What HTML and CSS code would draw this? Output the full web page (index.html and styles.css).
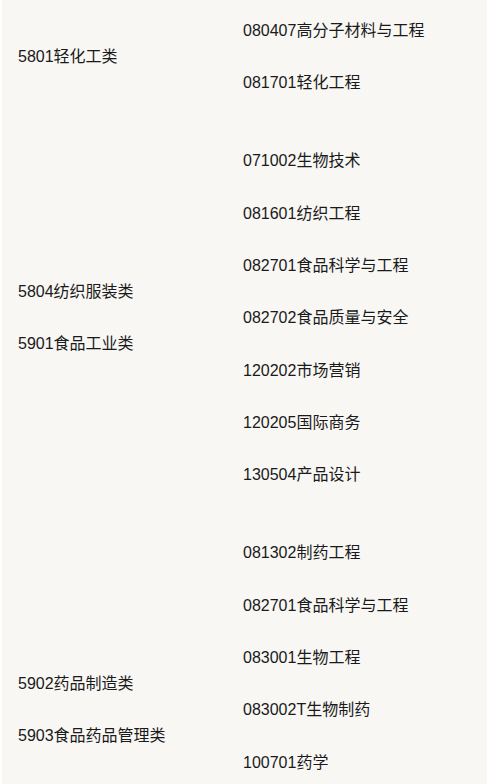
FILE: index.html
```html
<!DOCTYPE html>
<html lang="zh-CN">
<head>
<meta charset="utf-8">
<title>专业对照</title>
<link rel="stylesheet" href="styles.css">
</head>
<body>
<div class="sheet">
  <div class="group">
    <div class="cell cell-left">
      <p>5801轻化工类</p>
    </div>
    <div class="cell cell-right">
      <p>080407高分子材料与工程</p>
      <p>081701轻化工程</p>
    </div>
  </div>
  <div class="group">
    <div class="cell cell-left">
      <p>5804纺织服装类</p>
      <p>5901食品工业类</p>
    </div>
    <div class="cell cell-right">
      <p>071002生物技术</p>
      <p>081601纺织工程</p>
      <p>082701食品科学与工程</p>
      <p>082702食品质量与安全</p>
      <p>120202市场营销</p>
      <p>120205国际商务</p>
      <p>130504产品设计</p>
    </div>
  </div>
  <div class="group">
    <div class="cell cell-left">
      <p>5902药品制造类</p>
      <p>5903食品药品管理类</p>
    </div>
    <div class="cell cell-right">
      <p>081302制药工程</p>
      <p>082701食品科学与工程</p>
      <p>083001生物工程</p>
      <p>083002T生物制药</p>
      <p>100701药学</p>
      <p>100702药物制剂</p>
      <p>100801中药学</p>
    </div>
  </div>
</div>
</body>
</html>
```

FILE: styles.css
```css
html, body {
  margin: 0;
  padding: 0;
  background: #ffffff;
}

body {
  font-family: "Liberation Sans", Arial, "Noto Sans CJK SC", sans-serif;
  font-size: 16px;
  color: #1a1a1a;
}

.sheet {
  margin-left: 2px;
  width: 485px;
  background: #f8f7f4;
  display: flex;
  flex-direction: column;
}

.group {
  display: grid;
  grid-template-columns: 225px 1fr;
  align-items: center;
}

.cell {
  display: flex;
  flex-direction: column;
  gap: 26.33px;
  padding: 18px 0 34px 16px;
}

.cell p {
  margin: 0;
  line-height: 26px;
  white-space: nowrap;
}
```
